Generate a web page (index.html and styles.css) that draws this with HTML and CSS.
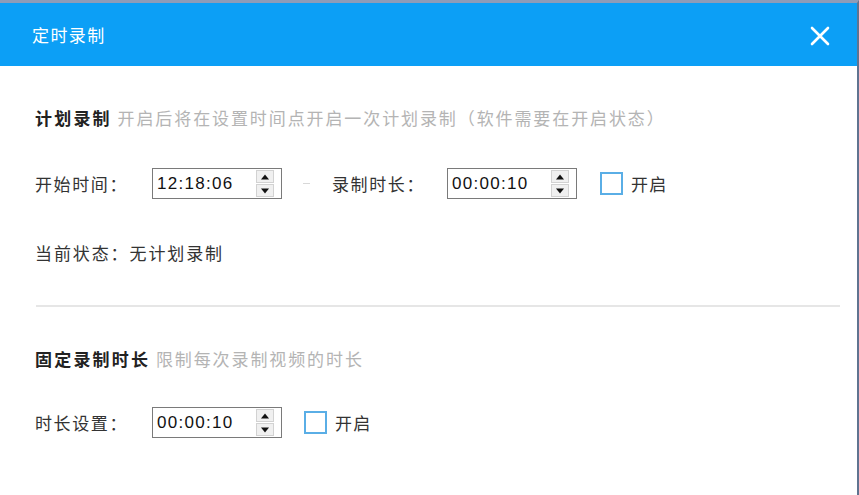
FILE: index.html
```html
<!DOCTYPE html>
<html lang="zh-CN">
<head>
<meta charset="utf-8">
<title>定时录制</title>
<link rel="stylesheet" href="styles.css">
</head>
<body>
<div class="window">
  <header class="titlebar">
    <span class="title">定时录制</span>
    <span class="close" aria-label="关闭">
      <svg width="20" height="20" viewBox="0 0 20 20"><path d="M2 2 L18 18 M18 2 L2 18" stroke="#fff" stroke-width="2.6" stroke-linecap="round" fill="none"/></svg>
    </span>
  </header>
  <main class="content">
    <section class="sec sec-plan">
      <div class="sec-title"><b>计划录制</b> <span class="desc">开启后将在设置时间点开启一次计划录制（软件需要在开启状态）</span></div>
      <div class="row">
        <span class="label">开始时间：</span>
        <div class="spin"><span class="val">12:18:06</span><span class="btns"><span class="up"></span><span class="down"></span></span></div>
        <span class="dash"></span>
        <span class="label label2">录制时长：</span>
        <div class="spin"><span class="val">00:00:10</span><span class="btns"><span class="up"></span><span class="down"></span></span></div>
        <span class="check"></span>
        <span class="check-text">开启</span>
      </div>
      <div class="status">当前状态：无计划录制</div>
    </section>
    <div class="divider"></div>
    <section class="sec sec-fixed">
      <div class="sec-title"><b>固定录制时长</b> <span class="desc">限制每次录制视频的时长</span></div>
      <div class="row">
        <span class="label">时长设置：</span>
        <div class="spin"><span class="val">00:00:10</span><span class="btns"><span class="up"></span><span class="down"></span></span></div>
        <span class="check check-b"></span>
        <span class="check-text">开启</span>
      </div>
    </section>
  </main>
</div>
</body>
</html>
```
FILE: styles.css
```css
html, body {
  margin: 0;
  padding: 0;
  background: #fff;
  overflow: hidden;
}
.window {
  width: 859px;
  height: 495px;
  box-sizing: border-box;
  border-top: 3px solid #8e9cb8;
  border-right: 2px solid #5f7390;
  font-family: "Noto Sans CJK SC", "Microsoft YaHei", sans-serif;
  color: #333;
  display: flex;
  flex-direction: column;
}
.titlebar {
  height: 63px;
  background: #0c9ff6;
  display: flex;
  align-items: center;
  justify-content: space-between;
  padding: 0 27px 0 32px;
  flex-shrink: 0;
}
.title {
  color: #fff;
  font-size: 17px;
  letter-spacing: 1.4px;
}
.close {
  display: flex;
  width: 20px;
  height: 20px;
  margin-top: 3px;
}
.content {
  padding: 0 17px 0 35px;
}
.sec-title {
  font-size: 17px;
  line-height: 24px;
  letter-spacing: 1.9px;
  white-space: nowrap;
}
.sec-title b {
  color: #222;
  font-weight: bold;
  letter-spacing: 2.2px;
}
.desc {
  color: #b4b4b4;
}
.sec-plan .sec-title {
  margin-top: 40px;
}
.row {
  display: flex;
  align-items: center;
  height: 31px;
  font-size: 17px;
  letter-spacing: 1.6px;
}
.sec-plan .row {
  margin-top: 38px;
}
.label {
  width: 117px;
  flex-shrink: 0;
}
.label2 {
  width: 115px;
}
.spin {
  width: 130px;
  height: 31px;
  box-sizing: border-box;
  border: 1px solid #7a7a7a;
  display: flex;
  align-items: center;
  justify-content: space-between;
  padding: 0 7px 0 4px;
  background: #fff;
}
.val {
  font-family: "Liberation Sans", Arial, sans-serif;
  font-size: 17px;
  letter-spacing: 1.3px;
  color: #111;
}
.btns {
  width: 18px;
  height: 27px;
  display: flex;
  flex-direction: column;
  gap: 1px;
}
.btns span {
  flex: 1;
  background: #f0f0f0;
  border: 1px solid #d2d2d2;
  position: relative;
}
.btns span::after {
  content: "";
  position: absolute;
  left: 50%;
  top: 50%;
  width: 0;
  height: 0;
  border-left: 4px solid transparent;
  border-right: 4px solid transparent;
  transform: translate(-50%, -50%);
}
.btns .up::after {
  border-bottom: 5px solid #111;
}
.btns .down::after {
  border-top: 5px solid #111;
}
.dash {
  width: 7px;
  height: 1px;
  background: #d8d8d8;
  margin: 0 22px 0 21px;
}
.check {
  width: 23px;
  height: 23px;
  box-sizing: border-box;
  border: 2px solid #5aaee6;
  margin-left: 23px;
  margin-right: 8px;
}
.check-b {
  margin-left: 22px;
}
.check-text {
  letter-spacing: 1.2px;
}
.status {
  margin-top: 42px;
  font-size: 17px;
  line-height: 24px;
  letter-spacing: 1.9px;
}
.divider {
  height: 2px;
  background: #e6e6e6;
  margin: 40px 0 0 1px;
}
.sec-fixed .sec-title {
  margin-top: 40px;
}
.sec-fixed .row {
  margin-top: 36px;
}
```
